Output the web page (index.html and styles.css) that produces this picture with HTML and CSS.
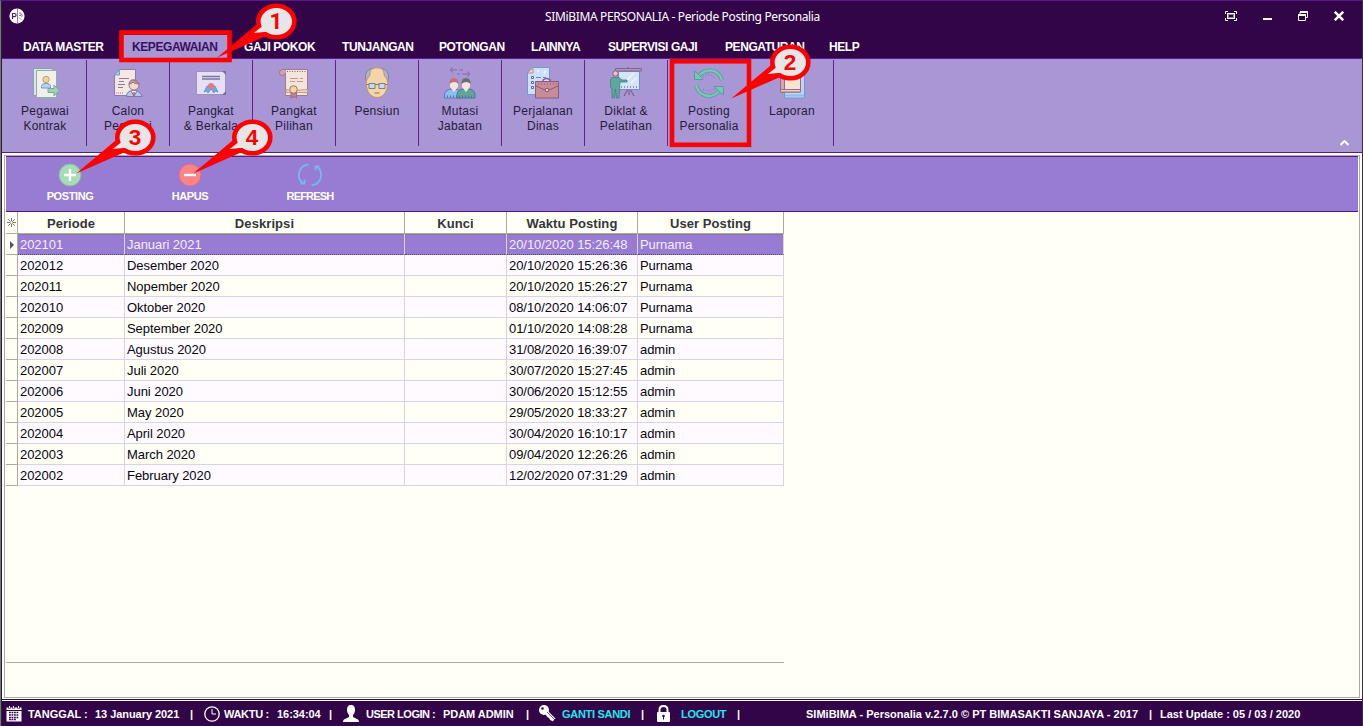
FILE: index.html
```html
<!DOCTYPE html>
<html lang="id">
<head>
<meta charset="utf-8">
<title>SIMiBIMA PERSONALIA</title>
<link rel="stylesheet" href="styles.css">
</head>
<body>
<div class="window">
  <header class="titlebar">
    <svg class="app-icon" width="16" height="16" viewBox="0 0 16 16"><circle cx="8" cy="8" r="7.600" fill="#fff"/><path d="M3.500 11V5.500h1.800q1.800 0 1.800 1.600t-1.800 1.600H3.500" fill="none" stroke="#4d226a" stroke-width="1.200"/><path d="M8.500 1v14M10 5h2v2.500h-2M12.500 6q2 1 0 3M10 9.500l2 2" fill="none" stroke="#75568e" stroke-width=".8"/></svg>
    <h1 class="title">SIMiBIMA PERSONALIA - Periode Posting Personalia</h1>
    <div class="controls">
      <svg width="12" height="10" viewBox="0 0 12 10"><path d="M.5 3V.5H3M9 .5h2.500V3M11.500 7v2.500H9M3 9.500H.5V7" fill="none" stroke="#fff"/><rect x="2.500" y="2.500" width="7" height="5" fill="#320549" stroke="#fff"/><rect x="3.500" y="3.500" width="5" height="3" fill="none" stroke="#8d78b0"/></svg>
      <svg width="9" height="10" viewBox="0 0 9 10"><path d="M0 8h9" stroke="#fff" stroke-width="2"/></svg>
      <svg width="10" height="10" viewBox="0 0 10 10"><path d="M2 3V1h8M9.500 1v5.500H8M0 4h8M.5 4v5.500h7V4" fill="none" stroke="#fff"/><path d="M2 1h8M0 4h8" stroke="#fff" stroke-width="2"/></svg>
      <svg width="10" height="10" viewBox="0 0 10 10"><path d="M.8.8l8.400 8.400M9.200.8L.8 9.200" stroke="#fff" stroke-width="2.500"/></svg>
    </div>
  </header>
  <nav class="menu">
    <span>DATA MASTER</span><span class="active">KEPEGAWAIAN</span><span>GAJI POKOK</span><span>TUNJANGAN</span><span>POTONGAN</span><span>LAINNYA</span><span>SUPERVISI GAJI</span><span>PENGATURAN</span><span>HELP</span>
  </nav>
  <section class="ribbon">
    <div class="tool"><svg viewBox="0 0 32 32"><path d="M4.500 1.500h19v27h-19z" fill="#e3f2f0" stroke="#7ba9a0"/><path d="M7.500 3.500h20v27h-20z" fill="#fdfbee" stroke="#8bb4a5"/><circle cx="17" cy="12.500" r="3.200" fill="#f8dc91" stroke="#c9a35c"/><path d="M12.500 21v-1.500q0-3 4.500-3t4.500 3V21z" fill="#b9dcf0" stroke="#6c9ac6"/><path d="M19 21.500h6v-3.500l5.500 5.500-5.500 5.500v-3.500h-6z" fill="#a4d9ac" stroke="#6aae91"/></svg><p>Pegawai<br>Kontrak</p></div>
    <div class="tool"><svg viewBox="0 0 32 32"><path d="M7.500 2.500h16v26h-21V8z" fill="#fbf5e4" stroke="#91739f"/><path d="M2.500 8l5-5.500V8z" fill="#a7d3ef" stroke="#749ac2"/><path d="M7 11.500h10M7 14.500h5M6 17.500h7M6 20.500h5M4 26h1m1 0h1m1 0h1m1 0h1" stroke="#91739f"/><circle cx="22" cy="18" r="5" fill="#ffe4cf" stroke="#9b6c82"/><path d="M17 17q1-5 5-4t5 4q-5 0-6-2-1 2-4 2z" fill="#c39a9a" stroke="#9b6c82"/><path d="M14.500 29.500q0-6 7-6t8.500 6z" fill="#b9cfed" stroke="#7376ac"/><path d="M19 24l3 5 3-5" fill="#fff" stroke="#7376ac"/><path d="M22 25v4" stroke="#b84f6b" stroke-width="1.500"/></svg><p>Calon<br>Pegawai</p></div>
    <div class="tool"><svg viewBox="0 0 32 32"><rect x="1.500" y="4.500" width="29" height="23" fill="#eeebf9" stroke="#9d8fc4"/><path d="M27 4h4v4zM31 24v4h-4z" fill="#716598"/><path d="M7 9.500h18M7 12h18" stroke="#79709e" stroke-width="1.300"/><path d="M12 19l-3 6 3-1 1 2 3-4 3 4 1-2 3 1-3-6z" fill="#72a9e1" stroke="#517fbb" stroke-width=".7"/><circle cx="16" cy="19" r="3" fill="#ee7770"/></svg><p>Pangkat<br>&amp; Berkala</p></div>
    <div class="tool"><svg viewBox="0 0 32 32"><path d="M7 2.500h22.500v26H7.500V8z" fill="#fdf2dc" stroke="#a67383"/><path d="M8 2.500H4q-3 1-2.500 3.500T4 8.500 7.500 6" fill="#d9a4a8" stroke="#a67383"/><path d="M9 4.500h19" stroke="#8b5471" stroke-dasharray="1 1.500"/><path d="M12 11.500h8m2 0h3M12 14.500h5m2 0h6" stroke="#e38a8a"/><path d="M8 22.500l5 1h5l11.500-1v3H8z" fill="#f9e4b0" stroke="#c99a86"/><path d="M13 26v5l3-1.500 2.500 1.500v-5z" fill="#c8848e" stroke="#9d6279"/><circle cx="15.500" cy="22.500" r="3.800" fill="#f9e0a0" stroke="#a66b62"/></svg><p>Pangkat<br>Pilihan</p></div>
    <div class="tool"><svg viewBox="0 0 32 32"><path d="M12 1.500Q4 2 4.500 11l1.500 5h20l1.500-5Q28 2 20 1.500z" fill="#afb9d5" stroke="#7b819e"/><path d="M16 .8c5 0 7 2.200 7 6.200 0 3 3.800 4 3.800 8.500C26.800 25 22 30.500 16 30.500S5.200 25 5.200 15.500C5.200 11 9 10 9 7c0-4 2-6.200 7-6.200z" fill="#ffdda2" stroke="#c0945c"/><path d="M5.500 17.500H8m6 0h4m6 0h2.500M13.500 26h5" fill="none" stroke="#956643"/><path d="M8 16.500h6v5H8zM18 16.500h6v5h-6z" fill="#cae7ec" stroke="#6f7f7f"/></svg><p>Pensiun</p></div>
    <div class="tool"><svg viewBox="0 0 32 32"><path d="M9 .5L6 3l3 2.500M6 3h7m2 0h4M23 4.500L26 7l-3 2.500M13 7h3m2 0h8" fill="none" stroke="#8563a3"/><path d="M.5 31v-3q0-5 7-6l4 0q5 1 6 4v5z" fill="#8ac4f1" stroke="#4c78ba"/><path d="M13 31v-3q0-5 6-6h6q6 1 6 6v3z" fill="#58aa92" stroke="#33768a"/><path d="M3 29.500h27" stroke="#406aa0" stroke-width="2" stroke-dasharray="1 2"/><path d="M6 14h8v6l-4 5-4-5zM18 14h8v6l-4 5-4-5z" fill="#fff0db"/><path d="M5.500 17q-.5-6 4.500-6t4.500 6q-4-4-9 0z" fill="#c36f76"/><path d="M17.500 17q-.5-6 4.500-6t4.500 6q-4-4-9 0z" fill="#626b65"/></svg><p>Mutasi<br>Jabatan</p></div>
    <div class="tool"><svg viewBox="0 0 32 32"><path d="M6.500.5h16v27H.5v-22z" fill="#d4ebfc" stroke="#6f99cc"/><path d="M.5 6L6 .5V6z" fill="#ffe4c9" stroke="#b88d87"/><path d="M4.500 9.500h2v2h-2zM4.500 14.500h2v2h-2zM4.500 19.500h2v2h-2z" fill="#fff" stroke="#4a648b"/><path d="M9 10.500h5m2 0h3M9 15.500h3" stroke="#6485b1"/><path d="M10 4h2M17 6l2-2" stroke="#fff" stroke-width="2"/><path d="M16 15v-2q4-3 7 0v2" fill="none" stroke="#77538b" stroke-width="1.500"/><path d="M8.500 14.500h23v16.500h-23z" fill="#ca8c92" stroke="#8b526c"/><path d="M9 19l9 4h4l9-4" fill="none" stroke="#8b526c"/><path d="M11 17h19" stroke="#8b526c" stroke-dasharray="1 2"/><path d="M18.500 21.500h3v3h-3z" fill="#ffe1a0" stroke="#8b526c"/></svg><p>Perjalanan<br>Dinas</p></div>
    <div class="tool"><svg viewBox="0 0 32 32"><path d="M18 2V0M18 22l-4 7M19 22v6M20 22l4 7" stroke="#76588e" stroke-width="1.200"/><path d="M8.500 4.500h21v18h-21z" fill="#d9effc" stroke="#6d90b6"/><path d="M5.500 1.500h26v2.500h-26z" fill="#b992b7" stroke="#80608e"/><path d="M17 13l7-7M21 16l6-6" stroke="#fff" stroke-width="1.500"/><path d="M11 20h18" stroke="#796da0" stroke-width="1.500" stroke-dasharray="1 2"/><circle cx="5.500" cy="6.500" r="2.700" fill="#f8cbb0" stroke="#795d7c"/><path d="M2 10.500h7l3 2.500h5v2h-7l-1 16H6.500l-1-9-1 9H2l0-10-1.500-1V13z" fill="#55aa95" stroke="#337c7b" stroke-width=".8"/></svg><p>Diklat &amp;<br>Pelatihan</p></div>
    <div class="tool"><svg viewBox="0 0 32 32"><path d="M6 9C12 1 25 1 29 13M26 24C18 33 6 29 3 18" fill="none" stroke="#529b9b" stroke-width="4"/><path d="M6 9C12 1 25 1 29 13M26 24C18 33 6 29 3 18" fill="none" stroke="#70cfb0" stroke-width="2.500"/><path d="M1.500 4v8.500H10l-3-4zM21 19.500h9.500V28l-4-3z" fill="#70cfb0" stroke="#529b9b"/><path d="M10 10q6-5 12 1M10 22q6 4 12-1" fill="none" stroke="#7e69b0" stroke-dasharray="1 2"/></svg><p>Posting<br>Personalia</p></div>
    <div class="tool"><svg viewBox="0 0 32 32"><path d="M8.500 2.500h20v28.500h-20z" fill="#bddffa" stroke="#6b98cc"/><path d="M9 28.500h19" stroke="#8bc4ee" stroke-width="2"/><path d="M4.500.5h20V25h-20z" fill="#fff0d2" stroke="#96637f"/><path d="M4.500.5h4v22h-4z" fill="#dfa8aa" stroke="#96637f"/><path d="M4.500 22.500h20V25h-20z" fill="#f9d9b5" stroke="#96637f"/></svg><p>Laporan</p></div>
    <svg class="collapse" width="9" height="6" viewBox="0 0 9 6"><path d="M.5 5l4-4 4 4" fill="none" stroke="#fff" stroke-width="2"/></svg>
  </section>
  <main class="content">
    <div class="toolbar">
      <div class="action"><svg width="24" height="24" viewBox="0 0 24 24"><circle cx="12" cy="12" r="11" fill="#a8dcb5" stroke="#88b9ad"/><path d="M12 6v12M6 12h12" stroke="#fff" stroke-width="2.400"/></svg>POSTING</div>
      <div class="action"><svg width="24" height="24" viewBox="0 0 24 24"><circle cx="12" cy="12" r="11" fill="#fb8585" stroke="#d76f8e"/><path d="M6 12h12" stroke="#fff" stroke-width="2.400"/></svg>HAPUS</div>
      <div class="action refresh"><svg width="24" height="24" viewBox="0 0 24 24" fill="none" stroke="#78b7f3" stroke-width="1.800"><path d="M10.500 1.700A10.300 10.300 0 0 0 5.500 20.500M13.500 22.300A10.300 10.300 0 0 0 18.500 3.500"/><path d="M2.500 20.500h4V16.500M21.500 3.500h-4v4"/></svg>REFRESH</div>
    </div>
    <table class="grid">
      <colgroup><col class="c0"><col class="c1"><col class="c2"><col class="c3"><col class="c4"><col class="c5"></colgroup>
      <thead><tr><th class="star"><svg width="9" height="9" viewBox="0 0 9 9"><path d="M4.500 0v9M0 4.500h9M1.200 1.200l6.600 6.600M7.800 1.200L1.200 7.800" stroke="#555" stroke-width=".8"/><circle cx="4.500" cy="4.500" r="1.200" fill="#fffff5"/></svg></th><th>Periode</th><th>Deskripsi</th><th>Kunci</th><th>Waktu Posting</th><th>User Posting</th></tr></thead>
      <tbody>
      <tr class="selected"><td><svg width="4" height="8" viewBox="0 0 4 8"><path d="M0 0l4 4-4 4z" fill="#555"/></svg></td><td>202101</td><td>Januari 2021</td><td></td><td>20/10/2020 15:26:48</td><td>Purnama</td></tr>
      <tr><td></td><td>202012</td><td>Desember 2020</td><td></td><td>20/10/2020 15:26:36</td><td>Purnama</td></tr>
      <tr><td></td><td>202011</td><td>Nopember 2020</td><td></td><td>20/10/2020 15:26:27</td><td>Purnama</td></tr>
      <tr><td></td><td>202010</td><td>Oktober 2020</td><td></td><td>08/10/2020 14:06:07</td><td>Purnama</td></tr>
      <tr><td></td><td>202009</td><td>September 2020</td><td></td><td>01/10/2020 14:08:28</td><td>Purnama</td></tr>
      <tr><td></td><td>202008</td><td>Agustus 2020</td><td></td><td>31/08/2020 16:39:07</td><td>admin</td></tr>
      <tr><td></td><td>202007</td><td>Juli 2020</td><td></td><td>30/07/2020 15:27:45</td><td>admin</td></tr>
      <tr><td></td><td>202006</td><td>Juni 2020</td><td></td><td>30/06/2020 15:12:55</td><td>admin</td></tr>
      <tr><td></td><td>202005</td><td>May 2020</td><td></td><td>29/05/2020 18:33:27</td><td>admin</td></tr>
      <tr><td></td><td>202004</td><td>April 2020</td><td></td><td>30/04/2020 16:10:17</td><td>admin</td></tr>
      <tr><td></td><td>202003</td><td>March 2020</td><td></td><td>09/04/2020 12:26:26</td><td>admin</td></tr>
      <tr><td></td><td>202002</td><td>February 2020</td><td></td><td>12/02/2020 07:31:29</td><td>admin</td></tr>
      </tbody>
    </table>
    <div class="grid-foot"></div>
  </main>
  <footer class="status">
    <svg width="16" height="16" viewBox="0 0 16 16"><path d="M.5 1.500h15v14H.5z" fill="#fff"/><path d="M0 4.500h16" stroke="#320549"/><path d="M3.500 0v3M7.500 0v3M12.500 0v3" stroke="#320549" stroke-width="2"/><path d="M3.500 0v2.500M7.500 0v2.500M12.500 0v2.500" stroke="#fff"/><path d="M3 6.500h10M3 9h10M3 11.500h10M3 13.500h7" stroke="#320549" stroke-width="1.500" stroke-dasharray="1.800 .7"/></svg>
    <span>TANGGAL :</span><span>13 January 2021</span><span>|</span>
    <svg width="16" height="16" viewBox="0 0 16 16"><circle cx="8" cy="8" r="7.200" fill="none" stroke="#fff" stroke-width="1.300"/><path d="M8 3v5h4" fill="none" stroke="#fff"/></svg>
    <span class="narrow">WAKTU :</span><span class="clock">16:34:04</span><span>|</span>
    <svg width="16" height="17" viewBox="0 0 16 17"><path d="M8 0C5 0 4 2 4 5c0 2 1 4 2 5v2l-5 2.500Q0 15 0 17h16q0-2-1-2.500L10 12v-2c1-1 2-3 2-5 0-3-1-5-4-5z" fill="#fff"/></svg>
    <span class="narrower">USER LOGIN :</span><span>PDAM ADMIN</span><span>|</span>
    <svg width="17" height="17" viewBox="0 0 17 17"><circle cx="5" cy="5" r="5" fill="#fff"/><circle cx="3.500" cy="3.500" r="1.300" fill="#320549"/><path d="M7 7l8 8" stroke="#fff" stroke-width="4"/><path d="M8 7l8 8" stroke="#320549" stroke-width=".7"/><path d="M8 10l2 2M11 13l2 2" stroke="#fff" stroke-width="2"/></svg>
    <span class="link narrow">GANTI SANDI</span><span>|</span>
    <svg width="13" height="17" viewBox="0 0 13 17"><path d="M2.500 8V5q0-4 4-4t4 4v3" fill="none" stroke="#fff" stroke-width="2"/><rect y="7" width="13" height="10" rx="1" fill="#fff"/><circle cx="6.500" cy="11" r="1.300" fill="#320549"/><path d="M6.500 11v3.500" stroke="#320549"/></svg>
    <span class="link narrow">LOGOUT</span><span>|</span>
    <span class="copy">SIMiBIMA - Personalia v.2.7.0 © PT BIMASAKTI SANJAYA - 2017</span><span>|</span><span class="updated">Last Update : 05 / 03 / 2020</span>
  </footer>
</div>
<svg class="annotations" width="1363" height="726" viewBox="0 0 1363 726">
  <defs>
    <g id="callout"><path d="M-59 36L-15-1 0 10-9 14Z" fill="#f00"/><ellipse rx="18" ry="15.800" fill="#e6e6e6" stroke="#f00" stroke-width="4.600"/><path d="M-22.500 11.500L-13 4-7 10Z" fill="#e6e6e6"/></g>
  </defs>
  <rect x="121.500" y="32.500" width="108" height="27.500" fill="none" stroke="#f00" stroke-width="4.600"/>
  <rect x="672" y="61.300" width="77" height="83.500" fill="none" stroke="#f00" stroke-width="4.600"/>
  <use href="#callout" x="276.300" y="21.500"/><use href="#callout" x="790.300" y="62.500"/><use href="#callout" x="135.300" y="137.500"/><use href="#callout" x="252.300" y="137.500"/>
  <g class="numbers"><text class="one" x="276" y="28.700">1</text><text x="790" y="69.700">2</text><text x="135" y="144.700">3</text><text x="252" y="144.700">4</text></g>
</svg>
</body>
</html>
```
FILE: styles.css
```css
* { box-sizing: border-box; }
body { margin: 0; background: #320549; font-family: "Liberation Sans", Arial, sans-serif; overflow: hidden; }
.window { width: 1363px; height: 726px; display: flex; flex-direction: column; border-left: 1px solid #77747d; border-right: 1px solid #382b40; border-top: 1px solid #561985; box-shadow: inset 1px 0 #26202a; }
.titlebar { height: 34px; display: grid; grid-template-columns: 302px 1fr 290px; padding: 7px 18px 0 8px; color: #fff; }
.title { margin: 0; font: 12px/17px "Noto Sans", "Open Sans", sans-serif; text-align: center; white-space: nowrap; letter-spacing: -.35px; }
.controls { display: flex; gap: 26px; justify-content: flex-end; padding-top: 3px; }
.menu { height: 24px; margin-left: 1px; display: grid; grid-template-columns: 98px 123px 98px 97px 92px 77px 117px 104px 60px; padding-left: 21px; border-bottom: 1px solid #5e1a90; color: #fff; font-size: 12px; font-weight: bold; line-height: 25px; white-space: nowrap; letter-spacing: -.42px; }
.menu .active { background: #a996d4; color: #38105f; margin-right: 14px; padding-left: 11px; }
.ribbon { height: 94px; margin-left: 1px; display: flex; position: relative; background: #a996d4; border-bottom: 1px solid #562080; padding-top: 1px; padding-left: 2px; }
.tool { width: 83px; height: 86px; padding-top: 7px; border-right: 1px solid #65208e; text-align: center; color: #271a3b; font-size: 12px; line-height: 15px; letter-spacing: .25px; }
.tool svg { display: block; width: 32px; height: 32px; margin: 0 auto; opacity: .88; }
.tool p { margin: 5px 0 0; }
.collapse { position: absolute; right: 13px; bottom: 6px; }
.content { height: 543px; margin: 2px 2px 2px 3px; background: #fffff5; border: 1px solid #a9aca1; padding: 0 1px; box-shadow: 0 0 0 2px #fff; }
.toolbar { height: 56px; border-top: 1px solid #562080; border-bottom: 1px solid #4d177a; background: #987bd2; display: flex; padding: 6px 0 0 4px; }
.action { width: 120px; display: flex; flex-direction: column; align-items: center; color: #fff; font-size: 11px; font-weight: bold; line-height: 18px; letter-spacing: -.4px; }
.refresh { letter-spacing: -.8px; }
.grid { width: 778px; table-layout: fixed; border-collapse: separate; border-spacing: 0; font-size: 13px; }
.c0 { width: 12px; } .c1 { width: 107px; } .c2 { width: 280px; } .c3 { width: 102px; } .c4 { width: 131px; } .c5 { width: 146px; }
.grid th { height: 22px; padding: 2px 0 0; border-right: 1px solid #a9aca1; border-bottom: 1px solid #a9aca1; color: #33363b; text-align: center; line-height: 19px; letter-spacing: .08px; }
.grid .star { padding: 0; }
.grid .star svg { display: block; margin: auto; }
.grid td { height: 21px; padding: 1px 0 0 2px; border-right: 1px solid #d9d3e8; border-bottom: 1px solid #d9d3e8; line-height: 19px; white-space: nowrap; color: #050510; letter-spacing: -.05px; }
.grid tr:nth-child(odd) td { background: #fffff5; }
.grid tr:nth-child(even) td { background: #fffaff; }
.grid tbody tr td:first-child { background: #fffff5; border-color: #a9aca1; padding-left: 4px; }
.grid td svg { display: block; }
.grid tbody .selected td:not(:first-child) { color: #f6edff; background: #987bd2; border-bottom: 1px dotted #554764; box-shadow: inset 0 1px #88749e; }
.grid-foot { width: 778px; height: 177px; border-bottom: 1px solid #a9aca1; }
.status { height: 26px; border-top: 1px solid #fff; box-shadow: 0 -1px #291438; color: #fff; display: grid; align-items: center; grid-template-columns: 22px 67px 95px 14px 20px 53px 52px 14px 23px 77px 83px 13px 23px 79px 16px 24px 56px 69px 343px 11px 150px; padding-left: 4px; margin-left: 1px; font-size: 11px; font-weight: bold; white-space: nowrap; letter-spacing: -.05px; }
.status .narrow { letter-spacing: -.3px; }
.status .narrower { letter-spacing: -.5px; }
.status .copy, .status .updated { letter-spacing: .01px; }
.link { color: #20e8ee; }
.annotations { position: absolute; top: 0; left: 0; pointer-events: none; }
.numbers { fill: #f00; font: bold 22.5px "Liberation Sans", Arial, sans-serif; text-anchor: middle; }
.one { font-family: Roboto, sans-serif; }
```
